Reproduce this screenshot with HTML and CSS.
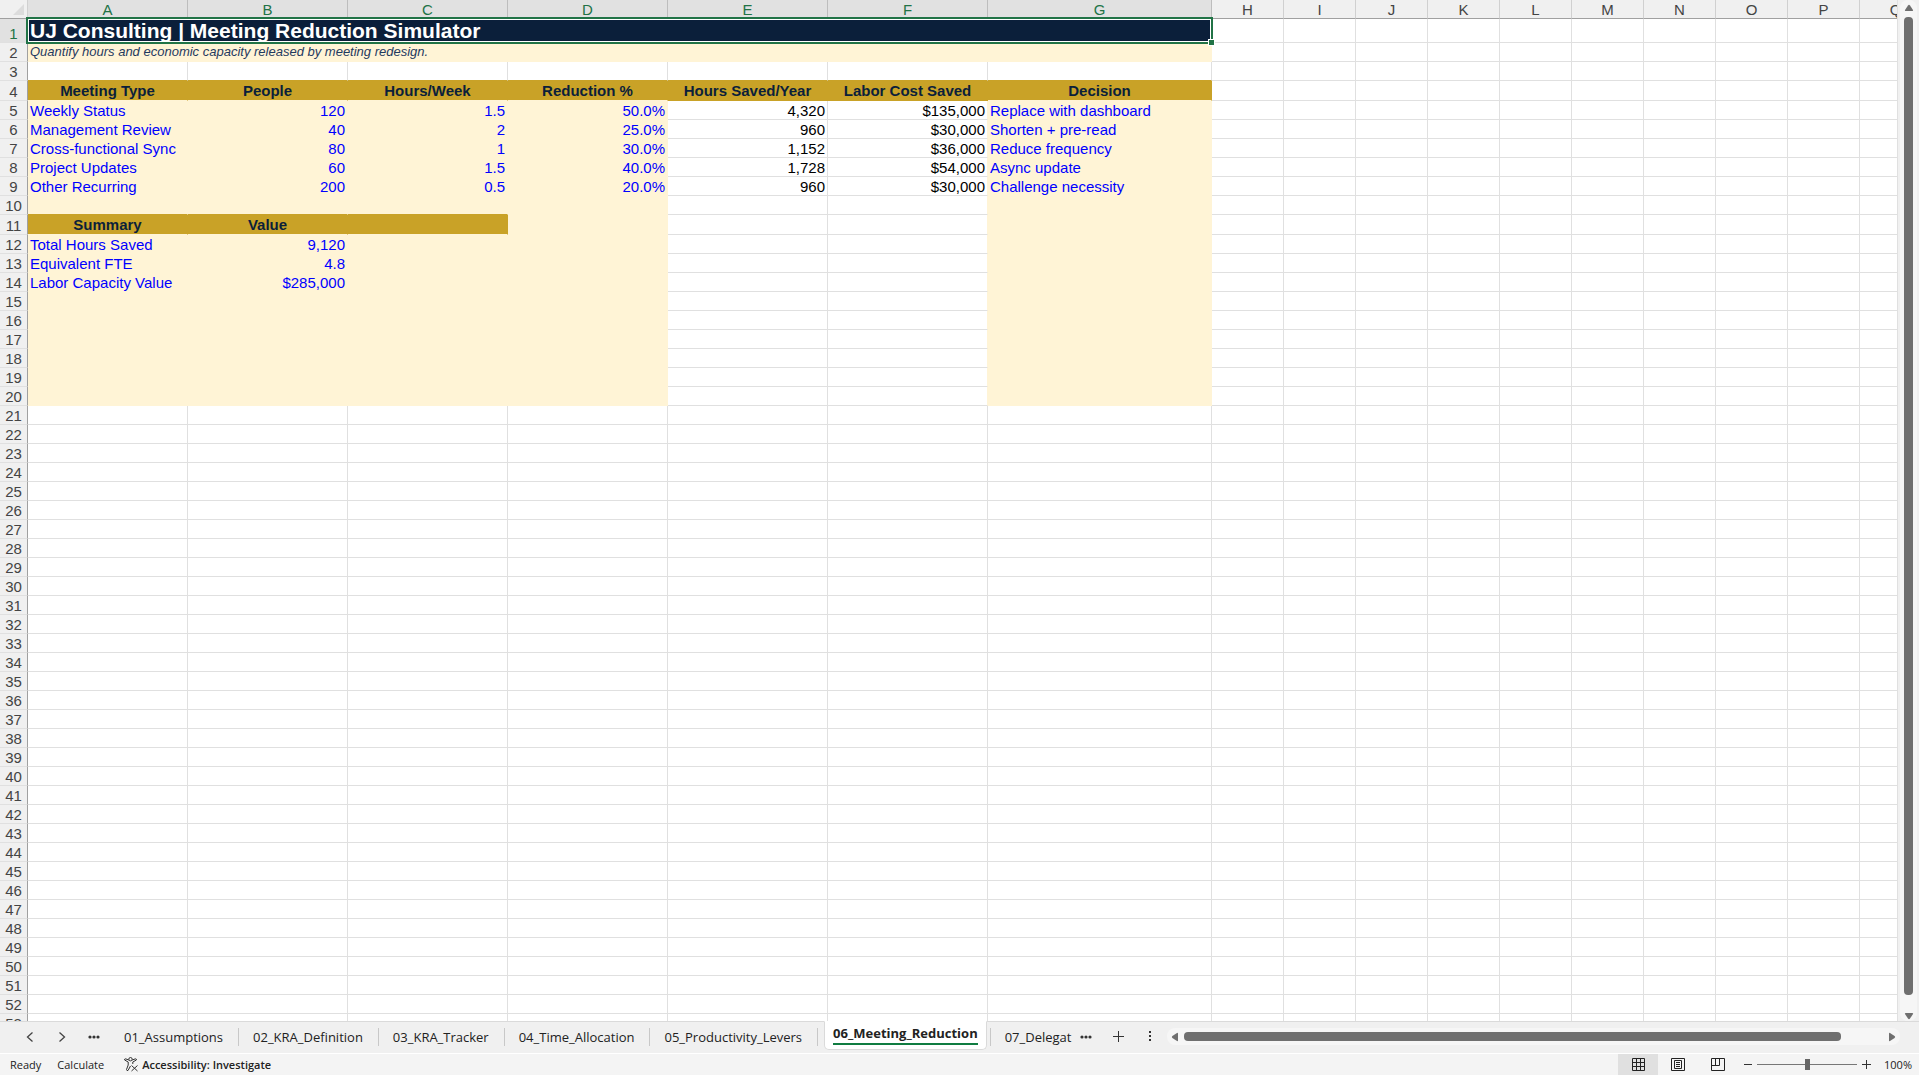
FILE: index.html
```html
<!DOCTYPE html>
<html lang="en">
<head>
    <meta charset="UTF-8">
    <title>UJ Consulting | Meeting Reduction Simulator</title>
    <link rel="stylesheet" href="styles.css">
</head>
<body>

<main class="workarea">
    <div class="sheet">
        <table class="grid">
            <colgroup>
                <col class="col-num">
                <col class="col-wide" span="6">
                <col class="col-decision">
                <col class="col-std" span="10">
            </colgroup>
            <thead>
                <tr>
                    <th class="corner"><svg width="11" height="11" viewBox="0 0 11 11"><path d="M11 0V11H0Z" fill="#dcdcdc"/></svg></th>
                    <th class="sel">A</th><th class="sel">B</th><th class="sel">C</th><th class="sel">D</th><th class="sel">E</th><th class="sel">F</th><th class="sel">G</th>
                    <th>H</th><th>I</th><th>J</th><th>K</th><th>L</th><th>M</th><th>N</th><th>O</th><th>P</th><th>Q</th>
                </tr>
            </thead>
            <tbody id="rows">
                <tr class="row-title"><th class="sel">1</th><td class="title" colspan="7">UJ Consulting | Meeting Reduction Simulator<span class="selection"></span><span class="handle"></span></td></tr>
                <tr><th>2</th><td class="subtitle" colspan="7">Quantify hours and economic capacity released by meeting redesign.</td></tr>
                <tr class="above-head"><th>3</th><td></td><td></td><td></td><td></td><td></td><td></td><td></td></tr>
                <tr class="row-head"><th>4</th><td class="head over-input">Meeting Type</td><td class="head over-input">People</td><td class="head over-input">Hours/Week</td><td class="head over-input">Reduction %</td><td class="head">Hours Saved/Year</td><td class="head">Labor Cost Saved</td><td class="head over-input">Decision</td></tr>
                <tr><th>5</th><td class="input">Weekly Status</td><td class="input num">120</td><td class="input num">1.5</td><td class="input num">50.0%</td><td class="num">4,320</td><td class="num edge">$135,000</td><td class="input">Replace with dashboard</td></tr>
                <tr><th>6</th><td class="input">Management Review</td><td class="input num">40</td><td class="input num">2</td><td class="input num">25.0%</td><td class="num">960</td><td class="num edge">$30,000</td><td class="input">Shorten + pre-read</td></tr>
                <tr><th>7</th><td class="input">Cross-functional Sync</td><td class="input num">80</td><td class="input num">1</td><td class="input num">30.0%</td><td class="num">1,152</td><td class="num edge">$36,000</td><td class="input">Reduce frequency</td></tr>
                <tr><th>8</th><td class="input">Project Updates</td><td class="input num">60</td><td class="input num">1.5</td><td class="input num">40.0%</td><td class="num">1,728</td><td class="num edge">$54,000</td><td class="input">Async update</td></tr>
                <tr><th>9</th><td class="input">Other Recurring</td><td class="input num">200</td><td class="input num">0.5</td><td class="input num">20.0%</td><td class="num">960</td><td class="num edge">$30,000</td><td class="input">Challenge necessity</td></tr>
                <tr><th>10</th><td class="input over-head"></td><td class="input over-head"></td><td class="input over-head"></td><td class="input"></td><td></td><td class="edge"></td><td class="input"></td></tr>
                <tr class="row-head"><th>11</th><td class="head over-input">Summary</td><td class="head over-input">Value</td><td class="head over-input"></td><td class="input"></td><td></td><td class="edge"></td><td class="input"></td></tr>
                <tr><th>12</th><td class="input">Total Hours Saved</td><td class="input num">9,120</td><td class="input"></td><td class="input"></td><td></td><td class="edge"></td><td class="input"></td></tr>
                <tr><th>13</th><td class="input">Equivalent FTE</td><td class="input num">4.8</td><td class="input"></td><td class="input"></td><td></td><td class="edge"></td><td class="input"></td></tr>
                <tr><th>14</th><td class="input">Labor Capacity Value</td><td class="input num">$285,000</td><td class="input"></td><td class="input"></td><td></td><td class="edge"></td><td class="input"></td></tr>
            </tbody>
        </table>
    </div>
    <div class="vscroll">
        <svg width="10" height="8" viewBox="0 0 10 8"><path d="M4 1.4Q5 .2 6 1.4L9 6Q9.5 7 8.400 7H1.6Q.5 7 1 6Z" fill="#6f6f6f"/></svg>
        <div class="thumb"></div>
        <svg width="10" height="8" viewBox="0 0 10 8"><path d="M4 6.6Q5 7.8 6 6.6L9 2Q9.5 1 8.400 1H1.6Q.5 1 1 2Z" fill="#6f6f6f"/></svg>
    </div>
</main>

<nav class="tabbar">
    <div class="tab-nav">
        <button type="button" aria-label="Previous sheet"><svg width="8" height="12" viewBox="0 0 8 12"><path d="M6.500 1.500L1.500 6L6.500 10.500" fill="none" stroke="#444" stroke-width="1.300"/></svg></button>
        <button type="button" aria-label="Next sheet"><svg width="8" height="12" viewBox="0 0 8 12"><path d="M1.500 1.500L6.500 6L1.500 10.500" fill="none" stroke="#444" stroke-width="1.300"/></svg></button>
        <button type="button" aria-label="More sheets"><svg width="12" height="4" viewBox="0 0 12 4"><g fill="#333"><circle cx="2" cy="2" r="1.600"/><circle cx="6" cy="2" r="1.600"/><circle cx="10" cy="2" r="1.600"/></g></svg></button>
    </div>
    <div class="tabs">
        <button type="button" class="tab">01_Assumptions</button>
        <button type="button" class="tab">02_KRA_Definition</button>
        <button type="button" class="tab">03_KRA_Tracker</button>
        <button type="button" class="tab">04_Time_Allocation</button>
        <button type="button" class="tab">05_Productivity_Levers</button>
        <button type="button" class="tab active"><span>06_Meeting_Reduction</span></button>
        <button type="button" class="tab last">07_Delegat</button>
    </div>
    <div class="tab-tools">
        <button type="button" aria-label="More sheets"><svg width="12" height="4" viewBox="0 0 12 4"><g fill="#333"><circle cx="2" cy="2" r="1.600"/><circle cx="6" cy="2" r="1.600"/><circle cx="10" cy="2" r="1.600"/></g></svg></button>
        <button type="button" aria-label="New sheet"><svg width="11" height="11" viewBox="0 0 11 11"><path d="M5.500 0V11M0 5.500H11" stroke="#333"/></svg></button>
        <button type="button" class="resize" aria-label="Resize tabs"><svg width="3" height="11" viewBox="0 0 3 11"><path d="M0 0H2V2H0ZM0 4H2V6H0ZM0 8H2V10H0Z" fill="#333"/></svg></button>
    </div>
    <div class="hscroll">
        <svg width="8" height="10" viewBox="0 0 8 10"><path d="M1.400 4Q.2 5 1.400 6L6 9Q7 9.500 7 8.400V1.600Q7 .5 6 1Z" fill="#6f6f6f"/></svg>
        <div class="track"><div class="thumb"></div></div>
        <svg width="8" height="10" viewBox="0 0 8 10"><path d="M6.600 4Q7.800 5 6.600 6L2 9Q1 9.500 1 8.400V1.600Q1 .5 2 1Z" fill="#6f6f6f"/></svg>
    </div>
</nav>

<footer class="status">
    <span class="state">Ready</span>
    <span class="state">Calculate</span>
    <button type="button" class="access">
        <svg width="14" height="15" viewBox="0 0 14 15" fill="none" stroke="#333"><circle cx="6.500" cy="2.200" r="1.700"/><path d="M4.800 3L1.500 1.800Q.4 1.800 .6 3L4.200 5V8L2.500 12.500Q2.700 14 4 13.500L6.500 9M8.200 3L11.500 1.800Q12.600 1.800 12.400 3L8.800 5V7M7.500 8.500L13.500 14M13.500 8.500L7.500 14"/></svg>
        Accessibility: Investigate
    </button>
    <div class="views">
        <button type="button" class="view on" aria-label="Normal"><svg width="13" height="13" viewBox="0 0 13 13"><path d="M.5 .5H12.500V12.500H.5ZM4.500 0V13M8.500 0V13M0 4.500H13M0 8.500H13" fill="none" stroke="#222"/></svg></button>
        <button type="button" class="view" aria-label="Page layout"><svg width="14" height="13" viewBox="0 0 14 13"><path d="M.5 .5H13.500V12.500H.5ZM3.500 2.500H10.500V10.500H3.500ZM5 4.500H9M5 6.500H9M5 8.500H9" fill="none" stroke="#222"/></svg></button>
        <button type="button" class="view" aria-label="Page break preview"><svg width="14" height="13" viewBox="0 0 14 13"><path d="M.5 .5H13.500V12.500H.5ZM4.500 1V7.500M0 7.500H8.500V0" fill="none" stroke="#222"/></svg></button>
    </div>
    <div class="zoom">
        <button type="button" aria-label="Zoom out"><svg width="8" height="9" viewBox="0 0 8 9"><path d="M0 4.500H8" stroke="#333"/></svg></button>
        <input type="range" min="10" max="190" value="100" aria-label="Zoom">
        <button type="button" aria-label="Zoom in"><svg width="9" height="9" viewBox="0 0 9 9"><path d="M0 4.500H9M4.500 0V9" stroke="#333"/></svg></button>
        <button type="button" class="percent">100%</button>
    </div>
</footer>

<script src="grid.js"></script>
</body>
</html>
```

FILE: styles.css
```css
* {
    box-sizing: border-box;
}
body {
    margin: 0;
    height: 100vh;
    display: flex;
    flex-direction: column;
    overflow: hidden;
    background: #f0f0f0;
    color: #222;
    font-family: "Open Sans", "Noto Sans", sans-serif;
    font-size: 11px;
}
button {
    border: none;
    padding: 0;
    background: none;
    color: inherit;
    font: inherit;
    display: flex;
    align-items: center;
    justify-content: center;
}
svg {
    display: block;
    flex: none;
}

/* worksheet */
.workarea {
    flex: 1;
    min-height: 0;
    display: flex;
}
.sheet {
    flex: 1;
    min-width: 0;
    overflow: hidden;
    background: #fff;
    border-right: 1px solid #e0e0e0;
}
.grid {
    width: 1932px;
    table-layout: fixed;
    border-spacing: 0;
    font-family: "Liberation Sans", Arial, sans-serif;
    font-size: 15px;
    line-height: 16px;
}
.col-num { width: 28px; }
.col-wide { width: 160px; }
.col-decision { width: 224px; }
.col-std { width: 72px; }

.grid td, .grid th {
    height: 19px;
    padding: 2px 2px 0;
    border-right: 1px solid #e0e0e0;
    border-bottom: 1px solid #e0e0e0;
    white-space: nowrap;
    vertical-align: bottom;
}
.grid th {
    padding: 2px 0 0;
    background: #f0f0f0;
    color: #444;
    font-weight: normal;
    text-align: center;
}
.grid thead th {
    border-right-color: #d0d0d0;
    border-bottom-color: #a0a0a0;
}
.grid tbody th {
    border-right-color: #a0a0a0;
}
.grid .sel {
    background: #e1e1e1;
    color: #217346;
}
.grid thead .sel {
    border-right-color: #bdbdbd;
}
.corner svg {
    margin: 0 3px 3px auto;
}
.grid .row-title > * { height: 24px; }
.grid .row-head > * { height: 20px; }

.grid .title {
    position: relative;
    border: none;
    background: #0b1f3a;
    color: #fff;
    font-size: 21px;
    font-weight: bold;
    line-height: 24px;
    padding: 0 2px;
}
.selection {
    position: absolute;
    top: -2px;
    left: -2px;
    right: -1px;
    bottom: -1px;
    border: 2px solid #217346;
    box-shadow: inset 0 0 0 1px #fff;
}
.handle {
    position: absolute;
    right: -3px;
    bottom: -3px;
    width: 7px;
    height: 7px;
    border: 1px solid #fff;
    background: #217346;
}
.grid .subtitle {
    padding: 1px 2px 0;
    background: #fff4d6;
    border-color: #fff4d6;
    color: #1f3a5f;
    font-size: 13px;
    font-style: italic;
    vertical-align: top;
}
.grid .head {
    background: #c9a227;
    border-color: #c9a227;
    color: #0b1f3a;
    font-weight: bold;
    text-align: center;
    vertical-align: top;
}
.grid td {
    color: #000;
}
.grid .input {
    background: #fff4d6;
    border-color: #fff4d6;
    color: #00f;
}
.grid .num {
    text-align: right;
}
/* fills run over the gridline of the cell before them */
.grid .edge { border-right-color: #fff4d6; }
.grid .over-input { border-bottom-color: #fff4d6; }
.grid .over-head,
.grid .above-head td:nth-child(-n+8) { border-bottom-color: #c9a227; }

/* scrollbars */
.vscroll {
    width: 17px;
    margin: 0 2px 0 2px;
    padding: 4px 0 1px;
    display: flex;
    flex-direction: column;
    align-items: center;
    gap: 5px;
    background: #f6f6f6;
    border-radius: 8px;
}
.vscroll .thumb {
    flex: 1;
    width: 9px;
    margin-bottom: 12px;
    border-radius: 4px;
    background: #6f6f6f;
}
.hscroll {
    flex: 1;
    height: 17px;
    margin: 0 19px 0 15px;
    padding: 0 4px;
    display: flex;
    align-items: center;
    gap: 5px;
    background: #f6f6f6;
    border-radius: 8px;
}
.hscroll .track {
    flex: 1;
}
.hscroll .thumb {
    width: 94%;
    height: 9px;
    border-radius: 4px;
    background: #6f6f6f;
}

/* sheet tabs */
.tabbar {
    height: 32px;
    display: flex;
    align-items: center;
    padding-bottom: 2px;
    border-top: 1px solid #dadada;
}
.tab-nav {
    padding-left: 14px;
    display: flex;
}
.tab-nav button {
    width: 32px;
    height: 24px;
}
.tabs {
    align-self: stretch;
    display: flex;
    align-items: center;
    font-size: 13px;
}
.tab {
    height: 18px;
    padding: 0 15px 0 14px;
    border-right: 1px solid #c8c8c8;
    line-height: 18px;
}
.tab.active {
    align-self: flex-start;
    height: 29px;
    margin: -1px 3px 0 6px;
    padding: 0 8px 3px;
    background: #fff;
    border: 1px solid #dadada;
    border-top-color: #fff;
    border-radius: 0 0 5px 5px;
    font-weight: 700;
}
.tab.active span {
    border-bottom: 2px solid #107c41;
    line-height: 20px;
}
.tab.last {
    border-right: none;
    border-left: 1px solid #c8c8c8;
    padding-right: 0;
}
.tab-tools {
    display: flex;
    align-items: center;
    padding-left: 9px;
    gap: 21px;
}
.resize {
    margin-left: 4px;
}

/* status bar */
.status {
    height: 22px;
    display: flex;
    align-items: center;
    background: #f4f4f4;
    border-top: 1px solid #fff;
    padding-left: 10px;
}
.state {
    margin-right: 16px;
}
.access {
    gap: 4px;
    margin-left: 4px;
    font-weight: 600;
}
.views {
    margin-left: auto;
    display: flex;
    align-self: stretch;
}
.view {
    width: 40px;
}
.view.on {
    background: #e0e0e0;
}
.zoom {
    display: flex;
    align-items: center;
    padding: 0 7px 0 6px;
    gap: 5px;
}
.zoom input {
    -webkit-appearance: none;
    appearance: none;
    width: 100px;
    height: 12px;
    margin: 0;
    background: linear-gradient(#777, #777) center / 100% 1px no-repeat;
}
.zoom input::-webkit-slider-thumb {
    -webkit-appearance: none;
    width: 5px;
    height: 11px;
    background: #666;
}
.percent {
    margin-left: 8px;
}
```

FILE: grid.js
```javascript
// fills the sheet up to column Q and row 53
var COLS = 17, ROWS = 53;
var body = document.getElementById('rows');

function addCell(tr, cls) {
    var td = document.createElement('td');
    if (cls) td.className = cls;
    tr.appendChild(td);
}

for (var r = body.rows.length + 1; r <= ROWS; r++) {
    var tr = document.createElement('tr');
    var th = document.createElement('th');
    th.textContent = r;
    tr.appendChild(th);
    // input area ends at row 20
    if (r <= 20) {
        ['input', 'input', 'input', 'input', '', 'edge', 'input'].forEach(function (c) { addCell(tr, c); });
    }
    body.appendChild(tr);
}

Array.prototype.forEach.call(body.rows, function (tr) {
    var used = 0;
    for (var i = 1; i < tr.cells.length; i++) used += tr.cells[i].colSpan;
    for (; used < COLS; used++) addCell(tr);
});
```
